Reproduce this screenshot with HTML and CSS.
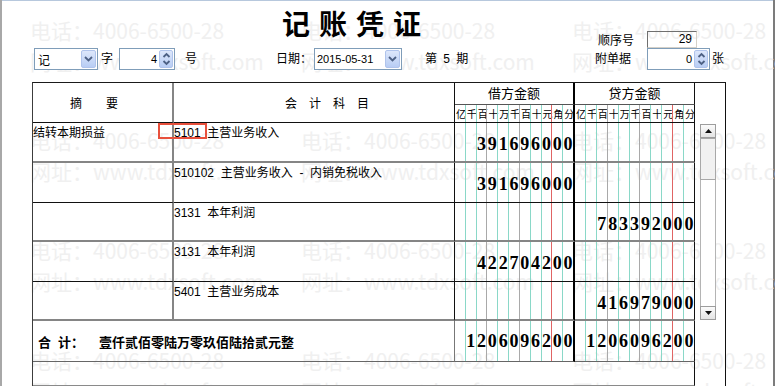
FILE: index.html
```html
<!DOCTYPE html>
<html lang="zh-CN">
  <head>
    <meta charset="utf-8">
    <title>记账凭证</title>
    <link rel="stylesheet" href="styles.css">
  </head>
  <body>
    <div class="window">
      <!-- watermark tiles behind everything -->
      <div class="watermark">
        <div class="wm"><p>电话：4006-6500-28</p><p>网址：www.tdxsoft.com</p></div>
        <div class="wm"><p>电话：4006-6500-28</p><p>网址：www.tdxsoft.com</p></div>
        <div class="wm"><p>电话：4006-6500-28</p><p>网址：www.tdxsoft.com</p></div>
        <div class="wm"><p>电话：4006-6500-28</p><p>网址：www.tdxsoft.com</p></div>
        <div class="wm"><p>电话：4006-6500-28</p><p>网址：www.tdxsoft.com</p></div>
        <div class="wm"><p>电话：4006-6500-28</p><p>网址：www.tdxsoft.com</p></div>
        <div class="wm"><p>电话：4006-6500-28</p><p>网址：www.tdxsoft.com</p></div>
        <div class="wm"><p>电话：4006-6500-28</p><p>网址：www.tdxsoft.com</p></div>
        <div class="wm"><p>电话：4006-6500-28</p><p>网址：www.tdxsoft.com</p></div>
        <div class="wm"><p>电话：4006-6500-28</p><p>网址：www.tdxsoft.com</p></div>
        <div class="wm"><p>电话：4006-6500-28</p><p>网址：www.tdxsoft.com</p></div>
        <div class="wm"><p>电话：4006-6500-28</p><p>网址：www.tdxsoft.com</p></div>
      </div>

      <div class="head">
        <h1 class="title">记账凭证</h1>
        <div class="seq">
          <span class="seq-lbl">顺序号</span>
          <span class="seq-box">29</span>
        </div>
      </div>

      <div class="bar">
        <div class="combo kind">
          <span class="val">记</span>
          <span class="drop"><svg width="9" height="6" viewBox="0 0 9 6"><polyline points="1,1 4.5,4.5 8,1" /></svg></span>
        </div>
        <span class="lbl zi">字</span>
        <div class="spin no">
          <span class="val">4</span>
          <span class="updown"><svg width="9" height="14" viewBox="0 0 9 14"><polyline points="1.5,5 4.5,2 7.5,5" /><polyline points="1.5,9 4.5,12 7.5,9" /></svg></span>
        </div>
        <span class="lbl hao">号</span>
        <span class="lbl date-lbl">日期：</span>
        <div class="combo date">
          <span class="val">2015-05-31</span>
          <span class="drop"><svg width="9" height="6" viewBox="0 0 9 6"><polyline points="1,1 4.5,4.5 8,1" /></svg></span>
        </div>
        <span class="lbl period">第 5 期</span>
        <span class="lbl att-lbl">附单据</span>
        <div class="spin att">
          <span class="val">0</span>
          <span class="updown"><svg width="9" height="14" viewBox="0 0 9 14"><polyline points="1.5,5 4.5,2 7.5,5" /><polyline points="1.5,9 4.5,12 7.5,9" /></svg></span>
        </div>
        <span class="lbl zhang">张</span>
      </div>

      <div class="voucher">
        <!-- header -->
        <div class="c h-sum">摘要</div>
        <div class="c h-acc">会计科目</div>
        <div class="c h-amt debit">借方金额</div>
        <div class="c h-amt">贷方金额</div>
        <div class="h-scroll"></div>
        <div class="c digits units debit"><span>亿</span><span>千</span><span>百</span><span>十</span><span>万</span><span>千</span><span>百</span><span>十</span><span>元</span><span>角</span><span>分</span></div>
        <div class="c digits units"><span>亿</span><span>千</span><span>百</span><span>十</span><span>万</span><span>千</span><span>百</span><span>十</span><span>元</span><span>角</span><span>分</span></div>

        <div class="scroll-body">
          <div class="sbar">
            <span class="sb-btn"><svg width="7" height="4" viewBox="0 0 7 4"><polygon points="0,4 3.5,0 7,4" /></svg></span>
            <span class="sb-thumb"></span>
            <span class="sb-track"></span>
            <span class="sb-btn"><svg width="7" height="4" viewBox="0 0 7 4"><polygon points="0,0 3.5,4 7,0" /></svg></span>
          </div>
        </div>

        <!-- row 1 -->
        <div class="c sum gray-b">结转本期损益</div>
        <div class="c acc gray-b">5101&nbsp; 主营业务收入</div>
        <div class="c digits debit gray-b"><span></span><span></span><span>3</span><span>9</span><span>1</span><span>6</span><span>9</span><span>6</span><span>0</span><span>0</span><span>0</span></div>
        <div class="c digits gray-b"><span></span><span></span><span></span><span></span><span></span><span></span><span></span><span></span><span></span><span></span><span></span></div>

        <!-- row 2 -->
        <div class="c sum"></div>
        <div class="c acc">510102&nbsp; 主营业务收入 &nbsp;-&nbsp; 内销免税收入</div>
        <div class="c digits debit"><span></span><span></span><span>3</span><span>9</span><span>1</span><span>6</span><span>9</span><span>6</span><span>0</span><span>0</span><span>0</span></div>
        <div class="c digits"><span></span><span></span><span></span><span></span><span></span><span></span><span></span><span></span><span></span><span></span><span></span></div>

        <!-- row 3 -->
        <div class="c sum gray-b"></div>
        <div class="c acc gray-b">3131&nbsp; 本年利润</div>
        <div class="c digits debit gray-b"><span></span><span></span><span></span><span></span><span></span><span></span><span></span><span></span><span></span><span></span><span></span></div>
        <div class="c digits gray-b"><span></span><span></span><span>7</span><span>8</span><span>3</span><span>3</span><span>9</span><span>2</span><span>0</span><span>0</span><span>0</span></div>

        <!-- row 4 -->
        <div class="c sum"></div>
        <div class="c acc">3131&nbsp; 本年利润</div>
        <div class="c digits debit"><span></span><span></span><span>4</span><span>2</span><span>2</span><span>7</span><span>0</span><span>4</span><span>2</span><span>0</span><span>0</span></div>
        <div class="c digits"><span></span><span></span><span></span><span></span><span></span><span></span><span></span><span></span><span></span><span></span><span></span></div>

        <!-- row 5 -->
        <div class="c sum gray-b"></div>
        <div class="c acc gray-b">5401&nbsp; 主营业务成本</div>
        <div class="c digits debit gray-b"><span></span><span></span><span></span><span></span><span></span><span></span><span></span><span></span><span></span><span></span><span></span></div>
        <div class="c digits gray-b"><span></span><span></span><span>4</span><span>1</span><span>6</span><span>9</span><span>7</span><span>9</span><span>0</span><span>0</span><span>0</span></div>

        <!-- total -->
        <div class="c total-lbl"><b class="he">合 计：</b><b>壹仟贰佰零陆万零玖佰陆拾贰元整</b></div>
        <div class="c digits debit total"><span></span><span>1</span><span>2</span><span>0</span><span>6</span><span>0</span><span>9</span><span>6</span><span>2</span><span>0</span><span>0</span></div>
        <div class="c digits total"><span></span><span>1</span><span>2</span><span>0</span><span>6</span><span>0</span><span>9</span><span>6</span><span>2</span><span>0</span><span>0</span></div>

        <div class="c foot"></div>
      </div>

      <!-- red marker drawn over the first account code -->
      <div class="mark"></div>
    </div>
  </body>
</html>
```

FILE: styles.css
```css
body {
  margin: 0;
  background: #ffffff;
  font-family: "Liberation Sans", "Noto Sans CJK SC", sans-serif;
  font-size: 12px;
  color: #000;
}

.window {
  position: relative;
  width: 775px;
  height: 386px;
  overflow: hidden;
  background: #fff;
  box-shadow: inset 2px 0 #a8a8a8, inset -2px 0 #7c7c7c, inset 0 1px #b7c8dd;
}

/* watermark */
.watermark {
  position: absolute;
  left: 0;
  top: 0;
  right: 0;
  bottom: 0;
  z-index: 0;
  display: grid;
  grid-template-columns: repeat(3, 271px);
  grid-auto-rows: 110px;
  padding: 15px 0 0 30px;
  color: #f0f0f0;
  font-family: "Noto Sans CJK SC", sans-serif;
  font-size: 21px;
  line-height: 31px;
  white-space: nowrap;
}

.wm p {
  margin: 0;
}

/* title + sequence number */
.head {
  position: relative;
  z-index: 1;
  height: 48px;
  display: flex;
  align-items: flex-end;
}

.title {
  align-self: flex-start;
  margin: 7px 0 0 282px;
  font-family: "Noto Sans CJK SC", sans-serif;
  font-size: 28px;
  font-weight: 700;
  line-height: 32px;
  letter-spacing: 9px;
}

.seq {
  margin-left: auto;
  margin-right: 78px;
  display: flex;
  align-items: center;
}

.seq-lbl {
  width: 49px;
  padding-left: 1px;
}

.seq-box {
  width: 50px;
  height: 17px;
  box-sizing: border-box;
  border: 1px solid #d4d0c8;
  border-top-color: #6f6f6f;
  border-left-color: #6f6f6f;
  text-align: right;
  padding-right: 4px;
  line-height: 15px;
}

/* toolbar */
.bar {
  position: relative;
  z-index: 1;
  height: 22px;
  display: flex;
  align-items: center;
}

.lbl {
  flex-shrink: 0;
  line-height: 16px;
}

.combo,
.spin {
  flex-shrink: 0;
  height: 22px;
  box-sizing: border-box;
  border: 1px solid #7f9db9;
  background: #fff;
  display: flex;
  align-items: center;
  padding: 1px;
}

.combo .val {
  flex: 1;
  padding-left: 2px;
}

.spin .val {
  flex: 1;
  text-align: right;
  padding-right: 2px;
  font-size: 11px;
}

.drop,
.updown {
  width: 15px;
  height: 18px;
  box-sizing: border-box;
  border: 1px solid #b0c4ec;
  border-radius: 2px;
  background: linear-gradient(#dde7fb, #b8cdf4);
  display: flex;
  align-items: center;
  justify-content: center;
}

.updown {
  width: 14px;
}

.drop polyline,
.updown polyline {
  fill: none;
  stroke: #4d6185;
  stroke-width: 1.8;
}

.kind {
  margin-left: 34px;
  width: 64px;
}

.zi {
  margin-left: 3px;
  width: 12px;
}

.no {
  margin-left: 6px;
  width: 56px;
}

.hao {
  margin-left: 10px;
  width: 12px;
}

.date-lbl {
  margin-left: 79px;
  width: 36px;
}

.date {
  margin-left: 2px;
  width: 88px;
}

.date .val {
  font-size: 11px;
  padding-left: 1px;
}

.period {
  margin-left: 23px;
  width: 44px;
  word-spacing: 3px;
}

.att-lbl {
  margin-left: 126px;
  width: 36px;
}

.att {
  margin-left: 16px;
  width: 63px;
}

.zhang {
  margin-left: 2px;
}

/* voucher grid */
.voucher {
  position: relative;
  z-index: 1;
  margin: 12px 0 0 32px;
  width: 694px;
  box-sizing: border-box;
  display: grid;
  grid-template-columns: 141px 281px 120px 120px 31px;
  grid-template-rows: 22px 18px 40px 40px 39px 40px 39px 41px 24px;
  border-left: 1px solid #3c3c3c;
  border-top: 1px solid #1a1a1a;
}

.c {
  box-sizing: border-box;
  min-width: 0;
  border-right: 1px solid #111;
  border-bottom: 1px solid #111;
}

.h-sum,
.sum {
  border-right: 2px solid #858585;
}

.h-sum {
  grid-row: span 2;
  display: flex;
  align-items: center;
  padding-left: 37px;
  letter-spacing: 24px;
}

.h-acc {
  grid-row: span 2;
  display: flex;
  align-items: center;
  padding-left: 111px;
  letter-spacing: 12px;
}

.h-amt {
  text-align: center;
  font-size: 13px;
  line-height: 21px;
  border-bottom-color: #555;
}

.debit {
  border-right: 2px solid #000;
}

.h-scroll {
  grid-column: 5;
  grid-row: 1 / 3;
  border-right: 1px solid #111;
}

.scroll-body {
  grid-column: 5;
  grid-row: 3 / 10;
  border-right: 1px solid #111;
  padding: 1px 0 0 5px;
}

.sbar {
  width: 16px;
  height: 196px;
  display: flex;
  flex-direction: column;
}

.sb-btn {
  height: 14px;
  box-sizing: border-box;
  border: 1px solid #9d9d9d;
  background: linear-gradient(#fbfbfb, #e4e4e4);
  display: flex;
  align-items: center;
  justify-content: center;
}

.sb-btn polygon {
  fill: #111;
}

.sb-thumb {
  height: 42px;
  box-sizing: border-box;
  border: 1px solid #a8a8a8;
  background: #f1f1f1;
}

.sb-track {
  flex: 1;
  border-left: 1px solid #b4b4b4;
  border-right: 1px solid #b4b4b4;
  background: #fff;
}

.sum,
.acc {
  line-height: 16px;
  padding-top: 2px;
  white-space: nowrap;
}

.gray-b {
  border-bottom: 2px solid #858585;
}

/* amount columns: 11 digit slots each */
.digits {
  display: flex;
}

.digits span {
  flex: 1 1 0;
  min-width: 0;
  border-left: 1px solid #8ad8c8;
  text-align: center;
  font-family: "Liberation Serif", serif;
  font-weight: 700;
  font-size: 18px;
  line-height: 42px;
  white-space: nowrap;
}

.digits span:first-child {
  border-left: 0;
}

.digits span:nth-child(4),
.digits span:nth-child(7) {
  border-left-color: #a9a9a9;
}

.digits span:nth-child(10) {
  border-left-color: #e06464;
}

.units span {
  font-family: "Noto Sans CJK SC", sans-serif;
  font-weight: 400;
  font-size: 10px;
  line-height: 17px;
  letter-spacing: -1px;
  text-indent: 1px;
}

.total span {
  line-height: 40px;
}

.total-lbl {
  grid-column: span 2;
  border-right-color: #777;
  border-bottom-color: #666;
  display: flex;
  align-items: center;
  padding-left: 5px;
  font-family: "Noto Sans CJK SC", sans-serif;
  font-size: 13px;
}

.total {
  border-bottom-color: #666;
}

.he {
  width: 61px;
  word-spacing: 4px;
}

.foot {
  grid-column: span 4;
  border-bottom-color: #8a8a8a;
}

/* annotation marker */
.mark {
  position: absolute;
  left: 158px;
  top: 123px;
  width: 49px;
  height: 16px;
  box-sizing: border-box;
  border: 2px solid #e8503c;
  z-index: 2;
}
```
